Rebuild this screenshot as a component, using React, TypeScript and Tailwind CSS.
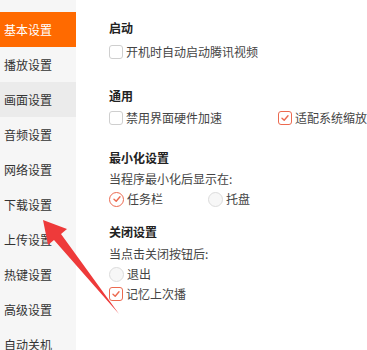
import React from 'react';

const MENU = ['基本设置', '播放设置', '画面设置', '音频设置', '网络设置', '下载设置', '上传设置', '热键设置', '高级设置', '自动关机'];

const ACCENT = '#ec6a50';

function Check({ checked }: { checked?: boolean }) {
  return (
    <span
      className={`flex h-[14px] w-[14px] shrink-0 items-center justify-center rounded-[3px] border bg-white ${
        checked ? 'border-[#ec6a50]' : 'border-[#cfcfcf]'
      }`}
    >
      {checked && (
        <svg width="10" height="10" viewBox="0 0 10 10" fill="none">
          <path d="M2 5.2 L4.2 7.2 L8 2.8" stroke={ACCENT} strokeWidth="1.4" strokeLinecap="round" strokeLinejoin="round" />
        </svg>
      )}
    </span>
  );
}

function Radio({ checked }: { checked?: boolean }) {
  return (
    <span
      className={`flex h-[15px] w-[15px] shrink-0 items-center justify-center rounded-full border ${
        checked ? 'border-[#ec6a50] bg-white' : 'border-[#dcdcdc] bg-[#f7f7f7]'
      }`}
    >
      {checked && (
        <svg width="10" height="10" viewBox="0 0 10 10" fill="none">
          <path d="M2 5.2 L4.2 7.2 L8 2.8" stroke={ACCENT} strokeWidth="1.4" strokeLinecap="round" strokeLinejoin="round" />
        </svg>
      )}
    </span>
  );
}

function Option({ children, kind, checked, className = '' }: { children: React.ReactNode; kind: 'check' | 'radio'; checked?: boolean; className?: string }) {
  return (
    <div className={`flex h-[20px] items-center gap-[3px] ${className}`}>
      {kind === 'check' ? <Check checked={checked} /> : <Radio checked={checked} />}
      <span className="text-[12px] text-[#444]">{children}</span>
    </div>
  );
}

export default function App() {
  return (
    <div
      className="relative flex h-[350px] w-full overflow-hidden bg-white"
      style={{ fontFamily: '"Noto Sans CJK SC", "Noto Sans", sans-serif' }}
    >
      <div className="flex w-[76px] shrink-0 flex-col bg-[#f6f6f6] pt-[12px]">
        {MENU.map((m, i) => (
          <div
            key={m}
            className={`flex h-[35px] shrink-0 items-center pl-[4px] text-[12px] ${
              i === 0 ? 'bg-[#ff6a00] text-white' : i === 2 ? 'bg-[#ebebeb] text-[#333]' : 'text-[#333]'
            }`}
          >
            {m}
          </div>
        ))}
      </div>

      <div className="flex flex-1 flex-col pl-[33px] pt-[18px] text-[12px]">
        <div className="flex h-[20px] items-center font-bold text-[#222]">启动</div>
        <Option kind="check" className="mt-[4px]">开机时自动启动腾讯视频</Option>

        <div className="mt-[24px] flex h-[20px] items-center font-bold text-[#222]">通用</div>
        <div className="mt-[2px] flex">
          <Option kind="check" className="w-[169px]">禁用界面硬件加速</Option>
          <Option kind="check" checked>适配系统缩放</Option>
        </div>

        <div className="mt-[20px] flex h-[20px] items-center font-bold text-[#222]">最小化设置</div>
        <div className="mt-[1px] flex h-[20px] items-center text-[#444]">当程序最小化后显示在:</div>
        <div className="flex">
          <Option kind="radio" checked className="w-[99px]">任务栏</Option>
          <Option kind="radio">托盘</Option>
        </div>

        <div className="mt-[13px] flex h-[20px] items-center font-bold text-[#222]">关闭设置</div>
        <div className="mt-[2px] flex h-[20px] items-center text-[#444]">当点击关闭按钮后:</div>
        <Option kind="radio">退出</Option>
        <Option kind="check" checked>记忆上次播</Option>
      </div>

      <svg className="pointer-events-none absolute left-0 top-0" width="367" height="350" viewBox="0 0 367 350">
        <polygon points="43,220 67,229 61,234 119,314 54,240 48,245" fill="#ee3a3a" />
      </svg>
    </div>
  );
}
